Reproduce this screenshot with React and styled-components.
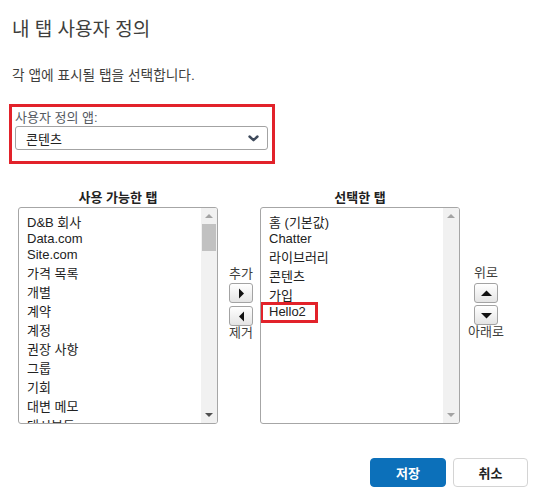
import React from "react";
import styled, { createGlobalStyle } from "styled-components";

const GlobalStyle = createGlobalStyle`
  html, body {
    margin: 0;
    padding: 0;
    background: #ffffff;
  }
  body {
    font-family: "Liberation Sans", Arial, "Noto Sans CJK KR", sans-serif;
    color: #3e3e3c;
  }
`;

const Page = styled.div`
  width: 548px;
  box-sizing: border-box;
  padding: 18px 20px 0 12px;
`;

const Title = styled.h2`
  margin: 0;
  font-size: 19px;
  font-weight: normal;
  line-height: 24px;
  color: #3e3e3c;
`;

const Description = styled.p`
  margin: 25px 0 0;
  font-size: 13.7px;
  line-height: 18px;
  color: #3e3e3c;
`;

const Highlight = styled.div`
  margin: 19px 0 0 -3px;
  width: 266px;
  height: 60px;
  box-sizing: border-box;
  border: 3px solid #e2222a;
  padding: 3px 4px 11px 3px;
`;

const FieldLabel = styled.div`
  font-size: 13px;
  line-height: 16px;
  color: #54595f;
`;

const SelectBox = styled.div`
  height: 24px;
  box-sizing: border-box;
  border: 1px solid #a3a3a3;
  border-radius: 3px;
  padding: 0 8px 0 10px;
  display: flex;
  align-items: center;
  justify-content: space-between;
  font-size: 13px;
  color: #222;
`;

const ListsRow = styled.div`
  margin: 26px 0 0 6px;
  display: flex;
  align-items: flex-start;
`;

const ListColumn = styled.div`
  width: 200px;
  display: flex;
  flex-direction: column;
`;

const ColumnLabel = styled.div`
  font-size: 13px;
  font-weight: bold;
  line-height: 16px;
  text-align: center;
  color: #222;
  margin-bottom: 1px;
`;

const ListBox = styled.div`
  height: 217px;
  box-sizing: border-box;
  border: 1px solid #a6a6a6;
  border-radius: 3px;
  display: flex;
  overflow: hidden;
`;

const Items = styled.div`
  flex: 1;
  padding: 4px 0 0 8px;
  overflow: hidden;
  font-size: 13px;
  line-height: normal;
  color: #222;
`;

const Item = styled.div`
  white-space: nowrap;
  min-height: 16px;
`;

const Marked = styled.span`
  position: relative;
  &::after {
    content: "";
    position: absolute;
    left: -9px;
    right: -12px;
    top: -2px;
    bottom: -4px;
    border: 3px solid #e2222a;
  }
`;

const Scrollbar = styled.div`
  width: 16px;
  background: #f1f1f1;
  display: flex;
  flex-direction: column;
`;

const ScrollArrow = styled.div`
  height: 16px;
  display: flex;
  align-items: center;
  justify-content: center;
`;

const ScrollTrack = styled.div`
  flex: 1;
  padding: 0 1px;
`;

const Thumb = styled.div`
  height: 27px;
  background: #c1c1c1;
`;

const SideColumn = styled.div`
  width: ${(p) => p.$width}px;
  box-sizing: border-box;
  padding: ${(p) => p.$top}px 0 0 ${(p) => p.$left}px;
  display: flex;
  flex-direction: column;
  align-items: center;
`;

const SideLabel = styled.div`
  font-size: 13px;
  line-height: 14px;
  color: #3e3e3c;
  white-space: nowrap;
`;

const ArrowButton = styled.button`
  width: 24px;
  height: 20px;
  padding: 0;
  box-sizing: border-box;
  border: 1px solid #a3a3a3;
  border-radius: 3px;
  background: linear-gradient(#ffffff, #e4e4e4);
  display: flex;
  align-items: center;
  justify-content: center;
  margin-top: ${(p) => p.$gap}px;
`;

const Footer = styled.div`
  margin-top: 34px;
  display: flex;
  justify-content: flex-end;
  gap: 7px;
`;

const FooterButton = styled.button`
  height: 29px;
  width: ${(p) => p.$width}px;
  border-radius: 4px;
  font-family: "Liberation Sans", Arial, "Noto Sans CJK KR", sans-serif;
  font-size: 13px;
  font-weight: bold;
  padding: 0;
  border: 1px solid ${(p) => (p.$primary ? "#0c70ba" : "#d4d4d4")};
  background: ${(p) => (p.$primary ? "#0c70ba" : "#ffffff")};
  color: ${(p) => (p.$primary ? "#ffffff" : "#222222")};
`;

const ScrollTri = ({ dir, color }) => (
  <svg width="8" height="8" viewBox="0 0 8 8">
    <polygon points={dir === "up" ? "0,6 4,2 8,6" : "0,2 4,6 8,2"} fill={color} />
  </svg>
);

const ButtonTri = ({ dir }) => {
  const pts = {
    up: "0,8 5.5,2.5 11,8",
    down: "0,3 5.5,8.5 11,3",
    right: "3,0.5 8,5.5 3,10.5",
    left: "8,0.5 3,5.5 8,10.5",
  }[dir];
  return (
    <svg width="11" height="11" viewBox="0 0 11 11">
      <polygon points={pts} fill="#111" />
    </svg>
  );
};

const Chevron = () => (
  <svg width="11" height="7" viewBox="0 0 11 7">
    <polyline
      points="1.5,1.5 5.5,5.2 9.5,1.5"
      fill="none"
      stroke="#3e4a5b"
      strokeWidth="2.4"
      strokeLinecap="round"
      strokeLinejoin="round"
    />
  </svg>
);

const available = [
  "D&B 회사",
  "Data.com",
  "Site.com",
  "가격 목록",
  "개별",
  "계약",
  "계정",
  "권장 사항",
  "그룹",
  "기회",
  "대변 메모",
  "대시보드",
];

const selected = ["홈 (기본값)", "Chatter", "라이브러리", "콘텐츠", "가입", "Hello2"];

function List({ items, marked, scrollable }) {
  return (
    <ListBox>
      <Items>
        {items.map((t) => (
          <Item key={t}>{t === marked ? <Marked>{t}</Marked> : t}</Item>
        ))}
      </Items>
      <Scrollbar>
        <ScrollArrow>
          <ScrollTri dir="up" color="#a3a3a3" />
        </ScrollArrow>
        <ScrollTrack>{scrollable && <Thumb />}</ScrollTrack>
        <ScrollArrow>
          <ScrollTri dir="down" color={scrollable ? "#505050" : "#a3a3a3"} />
        </ScrollArrow>
      </Scrollbar>
    </ListBox>
  );
}

export default function App() {
  return (
    <Page>
      <GlobalStyle />
      <Title>내 탭 사용자 정의</Title>
      <Description>각 앱에 표시될 탭을 선택합니다.</Description>
      <Highlight>
        <FieldLabel>사용자 정의 앱:</FieldLabel>
        <SelectBox>
          <span>콘텐츠</span>
          <Chevron />
        </SelectBox>
      </Highlight>
      <ListsRow>
        <ListColumn>
          <ColumnLabel>사용 가능한 탭</ColumnLabel>
          <List items={available} scrollable />
        </ListColumn>
        <SideColumn $width={42} $top={77} $left={4}>
          <SideLabel>추가</SideLabel>
          <ArrowButton $gap={2} aria-label="추가">
            <ButtonTri dir="right" />
          </ArrowButton>
          <ArrowButton $gap={3} aria-label="제거">
            <ButtonTri dir="left" />
          </ArrowButton>
          <SideLabel>제거</SideLabel>
        </SideColumn>
        <ListColumn>
          <ColumnLabel>선택한 탭</ColumnLabel>
          <List items={selected} marked="Hello2" />
        </ListColumn>
        <SideColumn $width={52} $top={76} $left={0}>
          <SideLabel>위로</SideLabel>
          <ArrowButton $gap={3} aria-label="위로">
            <ButtonTri dir="up" />
          </ArrowButton>
          <ArrowButton $gap={2} aria-label="아래로">
            <ButtonTri dir="down" />
          </ArrowButton>
          <SideLabel>아래로</SideLabel>
        </SideColumn>
      </ListsRow>
      <Footer>
        <FooterButton $primary $width={76}>저장</FooterButton>
        <FooterButton $width={75}>취소</FooterButton>
      </Footer>
    </Page>
  );
}
